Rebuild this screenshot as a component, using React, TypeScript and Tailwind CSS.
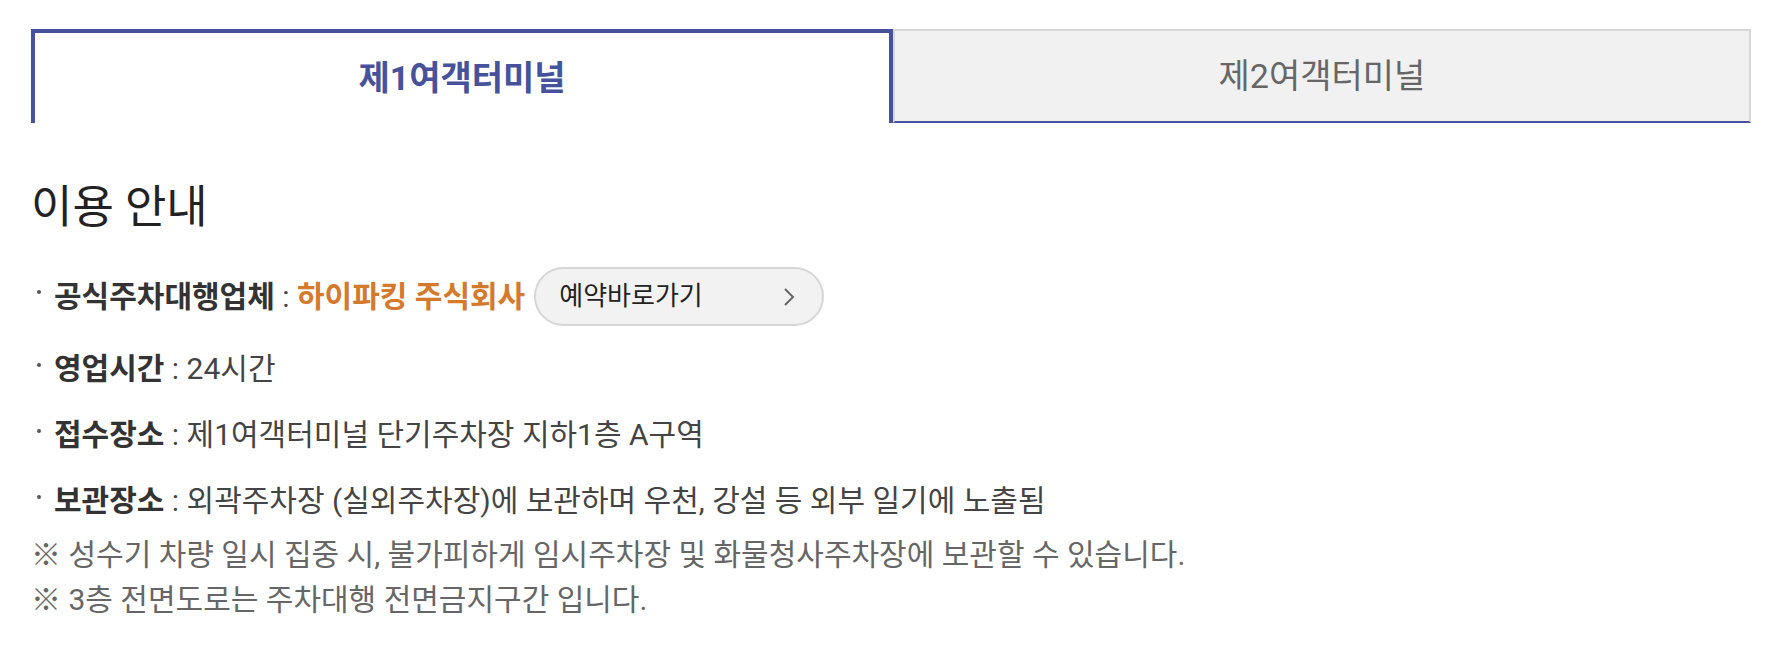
import React from 'react';

const items = [
  { label: '영업시간', text: '24시간' },
  { label: '접수장소', text: '제1여객터미널 단기주차장 지하1층 A구역' },
  { label: '보관장소', text: '외곽주차장 (실외주차장)에 보관하며 우천, 강설 등 외부 일기에 노출됨' },
];

const notes = [
  '※ 성수기 차량 일시 집중 시, 불가피하게 임시주차장 및 화물청사주차장에 보관할 수 있습니다.',
  '※ 3층 전면도로는 주차대행 전면금지구간 입니다.',
];

const Bullet: React.FC = () => (
  <span className="w-[4px] h-[4px] shrink-0 rounded-full bg-[#555] ml-[2px] mr-[13px] mb-[9px]" />
);

export default function App() {
  return (
    <div className="w-full h-[668px] bg-white pl-[31px] pr-[21px] pt-[29px] font-['Roboto','Noto_Sans_CJK_KR',sans-serif]">
      {/* terminal tabs */}
      <div className="flex h-[94px]">
        <button className="flex-1 flex items-center justify-center border-4 border-b-0 border-[#46529b] bg-white text-[34px] font-bold text-[#46529b]">
          제1여객터미널
        </button>
        <button className="flex-1 flex items-center justify-center border-2 border-[#d7d7d7] border-b-[#46529b] bg-[#f1f1f1] text-[34px] text-[#666]">
          제2여객터미널
        </button>
      </div>

      <h2 className="mt-[60px] text-[45px] leading-[50px] text-[#222]">이용 안내</h2>

      <ul className="mt-[34px] flex flex-col gap-[20px] pl-[4px] text-[30px] text-[#444]">
        <li className="flex items-center h-[59px]">
          <Bullet />
          <span className="font-bold text-[#333]">공식주차대행업체</span>
          <span className="whitespace-pre"> : </span>
          <span className="font-bold text-[#d57a2c]">하이파킹 주식회사</span>
          <button className="ml-[9px] w-[290px] h-[59px] flex items-center justify-between rounded-full border-2 border-[#d6d6d6] bg-[#f2f2f2] pl-[23px] pr-[27px] text-[26px] text-[#222]">
            예약바로가기
            <svg width="12" height="18" viewBox="0 0 12 18" fill="none">
              <path d="M2 1 L10 9 L2 17" stroke="#666" strokeWidth="2" />
            </svg>
          </button>
        </li>
        {items.map(item => (
          <li key={item.label} className="flex items-center leading-[46px]">
            <Bullet />
            <span className="font-bold text-[#333]">{item.label}</span>
            <span className="whitespace-pre"> : {item.text}</span>
          </li>
        ))}
      </ul>

      <div className="mt-[8px] text-[30px] leading-[45px] text-[#666]">
        {notes.map(n => (
          <p key={n}>{n}</p>
        ))}
      </div>
    </div>
  );
}
